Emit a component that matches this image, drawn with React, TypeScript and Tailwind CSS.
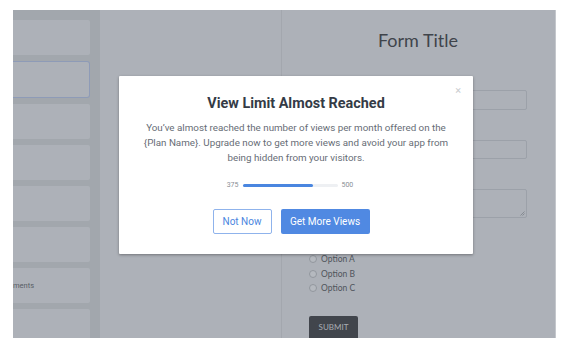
import React from "react";

const cards = [0, 1, 2, 3, 4, 5, 6, 7];

export default function App() {
  return (
    <div className="w-[562px] h-[349px] bg-white pl-[13px] pt-[10px]">
      <div className="relative w-[543px] h-[328px] flex overflow-hidden" style={{ fontFamily: "Lato, 'Noto Sans', sans-serif" }}>
        {/* left sidebar */}
        <div className="w-[87px] h-full bg-[#a2a7ad] pt-[10px] pr-[10px] flex flex-col gap-[6px] shrink-0">
          {cards.map((i) => (
            <div
              key={i}
              className={
                i === 1
                  ? "h-[37px] shrink-0 bg-[#adb1b8] rounded-r-[3px] border border-l-0 border-[#8e9bb7]"
                  : "h-[35px] shrink-0 bg-[#adb1b8] rounded-r-[2px] flex items-center"
              }
            >
              {i === 6 && (
                <span className="text-[7.5px] text-[#595e66]" style={{ fontFamily: "Roboto, sans-serif" }}>
                  ments
                </span>
              )}
            </div>
          ))}
        </div>
        {/* middle panel */}
        <div className="w-[182px] h-full bg-[#adb1b8] border-r border-[#a3a7ae] shrink-0" />
        {/* right panel */}
        <div className="flex-1 h-full bg-[#adb1b8] border-r border-[#c4c7cc] flex flex-col pl-[27px] pr-[28px] pt-[18px]">
          <div className="h-[24px] leading-[24px] text-[18px] text-[#3f444b] text-center">Form Title</div>
          <div className="mt-[38px] h-[21px] border border-[#9ca1a9] rounded-[2px]" />
          <div className="mt-[30px] h-[21px] border border-[#9ca1a9] rounded-[2px]" />
          <div className="mt-[30px] h-[31px] border border-[#9ca1a9] rounded-[2px] relative">
            <svg className="absolute right-[1px] bottom-[1px]" width="5" height="5" viewBox="0 0 5 5">
              <path d="M4.5 0.5 L0.5 4.5 M4.5 2.5 L2.5 4.5" stroke="#7c8188" strokeWidth="0.8" />
            </svg>
          </div>
          <div className="mt-[34px] flex flex-col">
            {["Option A", "Option B", "Option C"].map((o) => (
              <div key={o} className="h-[14.5px] flex items-center gap-[4px]">
                <span className="w-[8px] h-[8px] rounded-full border border-[#92979e] bg-[#b5b9bf]" />
                <span className="text-[8.5px] text-[#50555c]">{o}</span>
              </div>
            ))}
          </div>
          <div className="mt-[20px] w-[49px] h-[24px] bg-[#41454c] rounded-t-[2px] flex items-center justify-center text-[8px] text-[#a9adb3]">
            SUBMIT
          </div>
        </div>

        {/* modal */}
        <div
          className="absolute left-[106px] top-[66px] w-[354px] h-[178px] bg-white rounded-[1px] shadow-[0_1px_3px_rgba(0,0,0,0.35)] flex flex-col items-center pt-[19px]"
          style={{ fontFamily: "Roboto, 'Noto Sans', sans-serif" }}
        >
          <span className="absolute right-[12px] top-[9px] text-[11px] leading-[11px] text-[#c9ccd0]">×</span>
          <div className="h-[18px] leading-[18px] text-[14.4px] font-bold text-[#343b46]">View Limit Almost Reached</div>
          <p className="mt-[6.5px] text-center text-[9.8px] leading-[15px] text-[#676d76]">
            You’ve almost reached the number of views per month offered on the
            <br />
            {"{Plan Name}"}. Upgrade now to get more views and avoid your app from
            <br />
            being hidden from your visitors.
          </p>
          <div className="mt-[16.5px] -ml-[12px] h-[8px] flex items-center gap-[4px] text-[7px] text-[#8a8f96]">
            <span>375</span>
            <div className="w-[95px] h-[3px] rounded-full bg-[#eef0f3]">
              <div className="h-full rounded-full bg-[#4a86e0]" style={{ width: "74%" }} />
            </div>
            <span>500</span>
          </div>
          <div className="mt-[20px] -ml-[10px] flex gap-[9px]">
            <div className="w-[59px] h-[25px] border border-[#8fb3ec] rounded-[2px] flex items-center justify-center text-[10px] text-[#4a86e0]">
              Not Now
            </div>
            <div className="w-[89px] h-[25px] bg-[#5089e2] rounded-[2px] flex items-center justify-center text-[10px] text-white">
              Get More Views
            </div>
          </div>
        </div>
      </div>
    </div>
  );
}
